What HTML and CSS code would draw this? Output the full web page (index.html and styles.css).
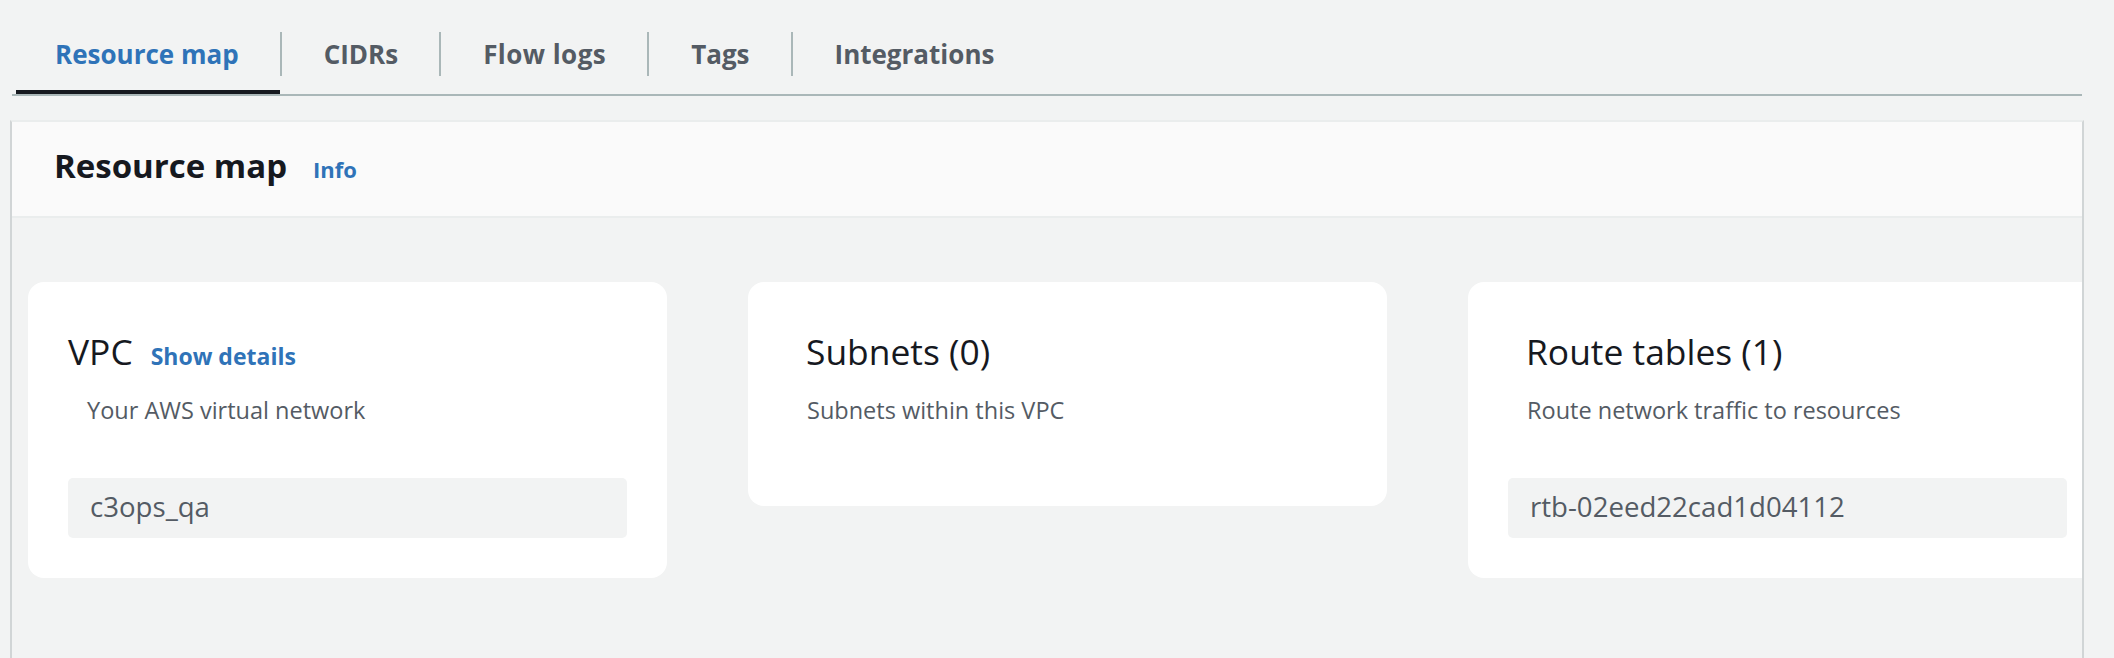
FILE: index.html
```html
<!DOCTYPE html>
<html lang="en">
<head>
<meta charset="utf-8">
<title>Resource map</title>
<link rel="stylesheet" href="styles.css">
</head>
<body>
<div class="page">
  <nav class="tabs">
    <div class="tab tab-active"><span class="tab-label tab-label-first">Resource map</span></div>
    <div class="tab"><span class="tab-label">CIDRs</span></div>
    <div class="tab"><span class="tab-label tab-label-wide">Flow logs</span></div>
    <div class="tab"><span class="tab-label">Tags</span></div>
    <div class="tab"><span class="tab-label">Integrations</span></div>
  </nav>

  <section class="panel">
    <header class="panel-header">
      <h2 class="panel-title">Resource map</h2>
      <a class="info-link" href="#">Info</a>
    </header>
    <div class="panel-body">
      <div class="cards">
        <div class="card">
          <div class="card-title-row">
            <h3 class="card-title card-title-flush">VPC</h3>
            <a class="details-link" href="#">Show details</a>
          </div>
          <p class="card-desc">Your AWS virtual network</p>
          <div class="resource-box">c3ops_qa</div>
        </div>

        <div class="card card-empty">
          <div class="card-title-row">
            <h3 class="card-title">Subnets (0)</h3>
          </div>
          <p class="card-desc">Subnets within this VPC</p>
        </div>

        <div class="card">
          <div class="card-title-row">
            <h3 class="card-title">Route tables (1)</h3>
          </div>
          <p class="card-desc">Route network traffic to resources</p>
          <div class="resource-box">rtb-02eed22cad1d04112</div>
        </div>
      </div>
    </div>
  </section>
</div>
</body>
</html>
```
FILE: styles.css
```css
html, body {
  margin: 0;
  padding: 0;
  overflow: hidden;
}

body {
  background: #f2f3f3;
  font-family: "Open Sans", "Noto Sans", sans-serif;
  color: #16191f;
}

.page {
  width: 2074px;
  padding-left: 10px;
}

/* ---------- Tabs ---------- */
.tabs {
  display: flex;
  margin: 0 2px;
  padding-left: 4px;
  border-bottom: 2px solid #aab7b8;
}

.tab {
  padding-top: 32px;
  padding-bottom: 14px;
  border-bottom: 4px solid transparent;
}

.tab-active {
  border-bottom-color: #16191f;
}

.tab-label {
  display: block;
  height: 44px;
  line-height: 44px;
  padding: 0 41px 0 42px;
  border-left: 2px solid #aab7b8;
  font-size: 26px;
  font-weight: 700;
  color: #545b64;
  white-space: nowrap;
}

.tab-label-first {
  border-left: none;
  padding-left: 39px;
}

.tab-label-wide {
  letter-spacing: 0.45px;
}

.tab-active .tab-label {
  color: #2f73b8;
}

/* ---------- Panel ---------- */
.panel {
  margin-top: 24px;
  border-top: 2px solid #eaeded;
  border-left: 2px solid #d1d5d6;
  border-right: 2px solid #d1d5d6;
  overflow: hidden;
}

.panel-header {
  display: flex;
  align-items: baseline;
  background: #fafafa;
  padding: 21px 42px 28px;
  border-bottom: 2px solid #eaeded;
}

.panel-title {
  margin: 0;
  font-size: 33px;
  line-height: 45px;
  font-weight: 700;
  color: #16191f;
}

.info-link {
  margin-left: 26px;
  font-size: 22px;
  font-weight: 700;
  color: #2f73b8;
  text-decoration: none;
}

.panel-body {
  padding: 64px 0 80px 16px;
  background: #f2f3f3;
}

.cards {
  display: flex;
  align-items: flex-start;
  gap: 81px;
}

.card {
  flex: 0 0 auto;
  width: 559px;
  padding: 45px 40px 40px;
  background: #ffffff;
  border-radius: 16px;
}

.card-empty {
  padding-bottom: 80px;
}

.card-title-row {
  display: flex;
  align-items: baseline;
}

.card-title {
  margin: 0;
  padding-left: 18px;
  font-size: 35.4px;
  line-height: 48px;
  font-weight: 400;
  color: #16191f;
  white-space: nowrap;
}

.card-title-flush {
  padding-left: 0;
}

.details-link {
  margin-left: 18px;
  font-size: 23px;
  font-weight: 700;
  color: #2f73b8;
  text-decoration: none;
}

.card-desc {
  margin: 19px 0 0;
  padding-left: 19px;
  font-size: 23.5px;
  line-height: 32px;
  color: #545b64;
  white-space: nowrap;
}

.resource-box {
  margin-top: 52px;
  height: 60px;
  line-height: 56px;
  padding: 0 22px;
  background: #f2f3f3;
  border-radius: 5px;
  font-size: 27.6px;
  color: #545b64;
  white-space: nowrap;
}
```
